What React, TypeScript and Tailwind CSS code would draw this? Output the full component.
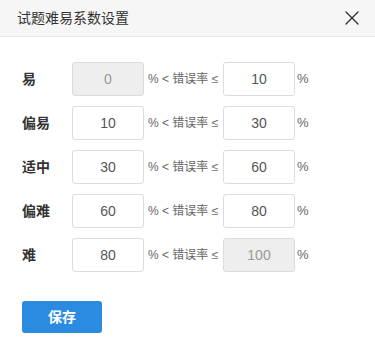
import { X } from 'lucide-react'

const rows = [
  { label: '易', min: '0', max: '10', minDisabled: true, maxDisabled: false },
  { label: '偏易', min: '10', max: '30', minDisabled: false, maxDisabled: false },
  { label: '适中', min: '30', max: '60', minDisabled: false, maxDisabled: false },
  { label: '偏难', min: '60', max: '80', minDisabled: false, maxDisabled: false },
  { label: '难', min: '80', max: '100', minDisabled: false, maxDisabled: true },
]

function Box({ value, disabled }: { value: string; disabled: boolean }) {
  return (
    <input
      type="text"
      defaultValue={value}
      disabled={disabled}
      className={`w-[72px] h-[34px] rounded-[3px] border border-[#dcdcdc] text-center text-[14px] outline-none ${disabled ? 'bg-[#eeeeee] text-[#999]' : 'bg-white text-[#555]'}`}
    />
  )
}

export default function App() {
  return (
    <div className="w-[375px] h-[349px] bg-white font-['Liberation_Sans','Noto_Sans_CJK_SC',sans-serif]">
      <div className="h-[37px] flex items-center justify-between pl-[17px] pr-[11px] bg-[#f6f6f6] border-b border-[#e8e8e8]">
        <span className="text-[14px] text-[#333]">试题难易系数设置</span>
        <X size={24} strokeWidth={1.4} className="text-[#333]" />
      </div>

      <div className="pl-[22px] pt-[25px] flex flex-col gap-[10px]">
        {rows.map(r => (
          <div key={r.label} className="flex items-center h-[34px]">
            <span className="w-[50px] text-[14px] font-bold text-[#333]">{r.label}</span>
            <Box value={r.min} disabled={r.minDisabled} />
            <span className="w-[79px] pl-[4px] text-[12px] text-[#666] whitespace-nowrap">% &lt; 错误率 ≤</span>
            <Box value={r.max} disabled={r.maxDisabled} />
            <span className="ml-[2px] text-[13px] text-[#666]">%</span>
          </div>
        ))}
      </div>

      <div className="pl-[22px] pt-[29px]">
        <button className="w-[80px] h-[32px] rounded-[3px] bg-[#2a8be0] text-white text-[14px] font-bold">
          保存
        </button>
      </div>
    </div>
  )
}
